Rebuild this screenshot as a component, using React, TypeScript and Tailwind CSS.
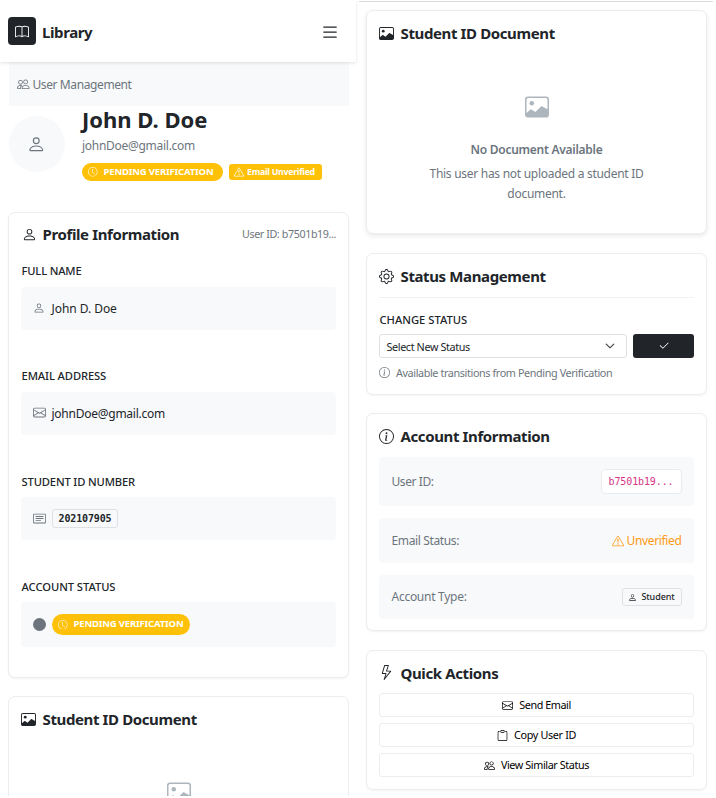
import type { ReactNode } from "react";
import {
  BsBook,
  BsCardText,
  BsCheck2,
  BsChevronDown,
  BsCircleFill,
  BsClipboard,
  BsClock,
  BsEnvelope,
  BsExclamationTriangle,
  BsGear,
  BsImage,
  BsInfoCircle,
  BsLightning,
  BsList,
  BsPeople,
  BsPerson,
} from "react-icons/bs";

function Card({ className, children }: { className: string; children: ReactNode }) {
  return (
    <section
      className={`flex w-[341px] shrink-0 flex-col rounded-[7px] border border-[#ebedef] bg-white px-3 ${className}`}
    >
      {children}
    </section>
  );
}

function CardTitle({ icon, children }: { icon: ReactNode; children: ReactNode }) {
  return (
    <h2 className="flex h-[45px] shrink-0 items-center text-[15px] font-bold tracking-[-0.38px] whitespace-nowrap text-[#212529]">
      <span className="flex w-[21.5px] items-center">{icon}</span>
      <span>{children}</span>
    </h2>
  );
}

function Field({ label, labelClass, className, children }: { label: string; labelClass: string; className?: string; children: ReactNode }) {
  return (
    <div className="flex h-[105px] shrink-0 flex-col">
      <div className={`h-[29px] pt-[5px] pl-[0.5px] text-[11.2px] font-medium whitespace-nowrap ${labelClass}`}>{label}</div>
      <div className={`flex items-center rounded bg-[#f8f9fa] px-3 text-[12px] ${className ?? "h-[43px]"}`}>{children}</div>
    </div>
  );
}

function PendingBadge({ className }: { className: string }) {
  return (
    <span className={`flex items-center rounded-full bg-[#ffc107] pl-[6px] text-[9.5px] font-bold whitespace-nowrap text-white ${className}`}>
      <BsClock className="mr-[6px] size-[9.5px] shrink-0" />
      <span className="tracking-[-0.17px]">PENDING VERIFICATION</span>
    </span>
  );
}

function InfoRow({ label, className, tracking, children }: { label: string; className: string; tracking: string; children: ReactNode }) {
  return (
    <div className={`flex shrink-0 items-center justify-between rounded bg-[#f8f9fa] pr-[12.5px] pl-[12.5px] text-[12px] text-[#6c757d] ${className}`}>
      <span className={tracking}>{label}</span>
      {children}
    </div>
  );
}

function Action({ icon, tracking, children }: { icon: ReactNode; tracking: string; children: ReactNode }) {
  return (
    <button className="mb-[6px] flex h-6 shrink-0 items-center justify-center gap-[6px] rounded-[3px] border border-[#ebeef0] text-[10.8px] whitespace-nowrap text-black">
      {icon}
      <span className={tracking}>{children}</span>
    </button>
  );
}

export default function App() {
  return (
    <div className="flex h-[798px] w-[716px] overflow-hidden bg-white font-['Noto_Sans','Open_Sans',sans-serif] text-[#212529]">
      <div className="flex h-[796px] w-[358px] shrink-0 flex-col overflow-hidden">
        <header className="z-10 flex h-[62px] w-[356px] shrink-0 items-center bg-white pl-[8px] shadow-[0_1px_3px_rgba(0,0,0,0.12)]">
          <span className="flex size-7 items-center justify-center rounded bg-[#212529] pt-px text-white">
            <BsBook className="size-[14px]" />
          </span>
          <span className="ml-[6px] pt-[3px] text-[15px] font-bold tracking-[-0.4px]">Library</span>
          <BsList className="mt-px mr-[16px] ml-auto size-5" />
        </header>
        <nav className="ml-[9px] flex h-[44px] w-[340px] shrink-0 items-center bg-[#f8f9fa] pl-[8px] text-[12px] text-[#6c757d]">
          <BsPeople className="mr-[3px] size-[12.5px]" />
          <span className="pt-px tracking-[-0.4px]">User Management</span>
        </nav>
        <div className="ml-[9px] flex h-[106px] shrink-0">
          <div className="mt-[10px] flex size-[56px] items-center justify-center rounded-full bg-[#f8f9fa] pr-[2px] text-[#6c757d]">
            <BsPerson className="size-[18.5px]" />
          </div>
          <div className="ml-[17px] flex flex-col items-start whitespace-nowrap">
            <h1 className="h-[30px] text-[22px] leading-[27px] font-bold tracking-[0px]">John D. Doe</h1>
            <p className="h-[27px] text-[12px] leading-[19px] tracking-[-0.28px] text-[#6c757d]">johnDoe@gmail.com</p>
            <div className="flex items-center gap-[6px]">
              <PendingBadge className="h-[18px] w-[141px]" />
              <span className="flex h-4 w-[93px] items-center rounded-[3px] bg-[#ffc107] pl-[5px] text-[8.8px] font-bold text-white">
                <BsExclamationTriangle className="mr-[3px] size-[10px] shrink-0" />
                <span className="pt-[2px] tracking-[-0.28px]">Email Unverified</span>
              </span>
            </div>
          </div>
        </div>
        <Card className="ml-[8px] h-[466px] shadow-[0_1px_2px_rgba(0,0,0,0.05)]">
          <div className="mb-[2px] flex h-[43px] shrink-0 items-center justify-between">
            <CardTitle icon={<BsPerson className="ml-[0.5px] size-[15px]" />}>Profile Information</CardTitle>
            <span className="text-[10.7px] tracking-[-0.38px] whitespace-nowrap text-[#6c757d]">User ID: b7501b19...</span>
          </div>
          <Field label="FULL NAME" labelClass="leading-[16px] tracking-[-0.17px]">
            <BsPerson className="mr-[6.5px] mb-[2px] size-[12px] text-[#6c757d]" />
            <span className="tracking-[-0.05px]">John D. Doe</span>
          </Field>
          <Field label="EMAIL ADDRESS" labelClass="leading-[16px] tracking-[-0.1px]">
            <BsEnvelope className="mr-[5.5px] mb-[2px] size-[13px] text-[#6c757d]" />
            <span className="tracking-[-0.25px]">johnDoe@gmail.com</span>
          </Field>
          <Field label="STUDENT ID NUMBER" labelClass="leading-[18px] tracking-[-0.14px]">
            <BsCardText className="mr-[6px] size-[13px] text-[#6c757d]" />
            <code className="flex h-[19px] w-[66px] items-center justify-center rounded-[3px] border border-[#dee2e6] bg-[#f8f9fa] font-['DejaVu_Sans_Mono',monospace] text-[10px] font-bold tracking-[-0.14px]">202107905</code>
          </Field>
          <Field label="ACCOUNT STATUS" labelClass="leading-[18px] tracking-[-0.05px]" className="h-[45px]">
            <BsCircleFill className="mr-[6px] size-[13px] text-[#6c757d]" />
            <PendingBadge className="h-[21px] w-[138px]" />
          </Field>
        </Card>
        <Card className="mt-[18px] ml-[8px] h-[224px]">
          <CardTitle icon={<BsImage className="size-[15px]" />}>Student ID Document</CardTitle>
          <BsImage className="mx-auto mt-[39px] size-[24px] shrink-0 text-[#adb5bd]" />
        </Card>
      </div>

      <div className="flex h-[796px] w-[355px] shrink-0 flex-col overflow-hidden pl-[8px]">
        <div className="mt-px -ml-[7px] h-px shrink-0 bg-[#d9dcdc]" />
        <Card className="mt-[8px] h-[224px] shadow-[0_2px_5px_rgba(0,0,0,0.09)]">
          <CardTitle icon={<BsImage className="size-[15px]" />}>Student ID Document</CardTitle>
          <div className="flex flex-col items-center pt-[39px] text-center text-[12px] whitespace-nowrap text-[#6c757d]">
            <BsImage className="size-[24px] text-[#adb5bd]" />
            <div className="mt-[20px] h-[22px] leading-[22px] font-semibold tracking-[-0.26px]">No Document Available</div>
            <div className="mt-[3px] leading-[20px] tracking-[-0.28px]">
              This user has not uploaded a student ID
              <br />
              document.
            </div>
          </div>
        </Card>
        <Card className="mt-[19px] h-[142px] shadow-[0_1px_2px_rgba(0,0,0,0.05)]">
          <div className="mb-[14px] h-[44px] shrink-0 border-b border-[#f1f1f2]">
            <CardTitle icon={<BsGear className="size-[15px]" />}>Status Management</CardTitle>
          </div>
          <div className="h-[22px] pl-[0.5px] text-[11.2px] leading-[16px] font-medium tracking-[0px]">CHANGE STATUS</div>
          <div className="flex gap-[6px]">
            <div className="flex h-6 w-[248px] items-center justify-between rounded-[3px] border border-[#dee2e6] pr-[11px] pl-[6.5px] text-[10.8px]">
              <span className="pt-[2px] tracking-[-0.38px]">Select New Status</span>
              <BsChevronDown className="size-[10px]" strokeWidth={0.8} />
            </div>
            <button className="flex h-6 w-[61px] items-center justify-center rounded-[3px] bg-[#212529] text-white">
              <BsCheck2 className="size-[12px]" />
            </button>
          </div>
          <div className="mt-[6px] flex h-[18px] items-center text-[10.8px] whitespace-nowrap text-[#6c757d]">
            <BsInfoCircle className="mr-[6px] mb-px size-[11px] shrink-0" />
            <span className="tracking-[-0.39px]">Available transitions from Pending Verification</span>
          </div>
        </Card>
        <Card className="mt-[18px] h-[218px] shadow-[0_1px_2px_rgba(0,0,0,0.05)]">
          <CardTitle icon={<BsInfoCircle className="size-[15px]" />}>Account Information</CardTitle>
          <InfoRow label="User ID:" className="-mt-[2px] h-[49px]" tracking="tracking-[-0.42px]">
            <code className="flex h-[25px] w-[81px] items-center justify-center rounded-[4px] border border-[#e9ecef] bg-white font-['DejaVu_Sans_Mono',monospace] text-[10px] tracking-[-0.12px] text-[#d63384]">b7501b19...</code>
          </InfoRow>
          <InfoRow label="Email Status:" className="mt-[12px] h-[45px]" tracking="pt-px tracking-[-0.37px]">
            <span className="flex items-center gap-[3px] text-[#fd9a14]">
              <BsExclamationTriangle className="size-[12px]" />
              <span className="pt-px tracking-[-0.36px]">Unverified</span>
            </span>
          </InfoRow>
          <InfoRow label="Account Type:" className="mt-[12px] h-[44px]" tracking="tracking-[-0.27px]">
            <span className="flex h-[18px] w-[60px] items-center justify-center gap-[4px] rounded-[3px] border border-[#dee2e6] text-[9px] font-medium text-[#212529]">
              <BsPerson className="size-[9px]" />
              <span className="tracking-[-0.1px]">Student</span>
            </span>
          </InfoRow>
        </Card>
        <Card className="mt-[19px] h-[140px] shadow-[0_1px_2px_rgba(0,0,0,0.05)]">
          <CardTitle icon={<BsLightning className="mb-[2px] size-[15px]" />}>Quick Actions</CardTitle>
          <div className="-mt-[3px] flex flex-col">
            <Action icon={<BsEnvelope className="size-[11px]" />} tracking="tracking-[-0.44px]">Send Email</Action>
            <Action icon={<BsClipboard className="size-[11px]" />} tracking="tracking-[-0.33px]">Copy User ID</Action>
            <Action icon={<BsPeople className="size-[11px]" />} tracking="tracking-[-0.4px]">View Similar Status</Action>
          </div>
        </Card>
      </div>
    </div>
  );
}
